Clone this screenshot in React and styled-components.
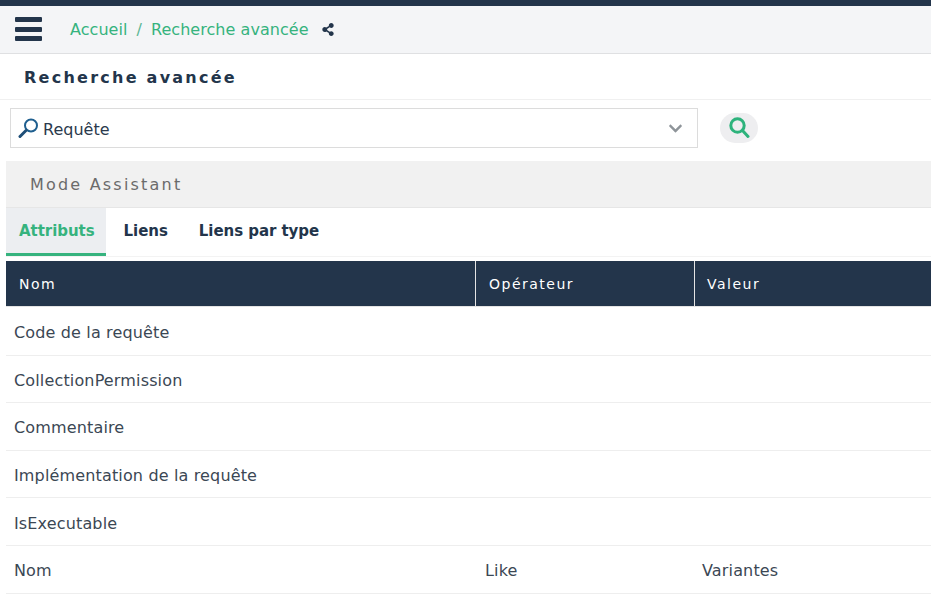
import React from "react";
import styled, { createGlobalStyle } from "styled-components";
import { FaShareAlt, FaChevronDown } from "react-icons/fa";

const GlobalStyle = createGlobalStyle`
  html, body {
    margin: 0;
    padding: 0;
    background: #fff;
    overflow: hidden;
    font-family: "DejaVu Sans", sans-serif;
  }
`;

const Page = styled.div`
  width: 931px;
  height: 599px;
  overflow: hidden;
  border-top: 6px solid #23354b;
  box-sizing: border-box;
`;

const NavBar = styled.div`
  display: flex;
  align-items: center;
  height: 47px;
  background: #f4f5f7;
  border-bottom: 1px solid #dfe0e2;
  padding-left: 15px;
`;

const Burger = styled.svg`
  width: 27px;
  height: 24px;
  margin: -1px 28px 0 0;
`;

const Crumb = styled.span`
  font-size: 16px;
  letter-spacing: 0.05px;
  color: #36b37e;
`;

const CrumbSep = styled(Crumb)`
  margin: 0 9px;
  color: #5cb795;
`;

const ShareIcon = styled(FaShareAlt)`
  width: 12px;
  height: 13px;
  color: #23354b;
  margin-left: 13px;
`;

const TitleRow = styled.div`
  display: flex;
  align-items: center;
  box-sizing: border-box;
  height: 46px;
  padding: 1px 0 0 24px;
  border-bottom: 1px solid #f0f0f0;
`;

const Title = styled.h1`
  margin: 0;
  font-size: 16px;
  font-weight: 700;
  letter-spacing: 2.25px;
  color: #23354b;
`;

const SearchRow = styled.div`
  display: flex;
  align-items: flex-start;
  padding: 8px 0 0 10px;
  height: 53px;
`;

const Select = styled.div`
  display: flex;
  align-items: center;
  box-sizing: border-box;
  width: 688px;
  height: 40px;
  border: 1px solid #dcdcdc;
  padding: 2px 14px 0 7px;
  font-size: 16px;
  color: #2b3a4d;
`;

const SelectIcon = styled.svg`
  width: 21px;
  height: 21px;
  margin: -2px 4px 0 0;
  flex: none;
`;

const SelectLabel = styled.span`
  flex: 1;
`;

const Chevron = styled(FaChevronDown)`
  width: 15px;
  height: 15px;
  margin-top: -2px;
  color: #8e9499;
`;

const SearchButton = styled.button`
  display: flex;
  align-items: center;
  justify-content: center;
  width: 38px;
  height: 30px;
  margin: 5px 0 0 22px;
  padding: 0;
  border: none;
  border-radius: 15px;
  background: #eeeef0;
`;

const ModeBar = styled.div`
  display: flex;
  align-items: center;
  height: 46px;
  margin-left: 6px;
  padding-left: 24px;
  background: #f1f1f1;
  border-bottom: 1px solid #e6e6e6;
  font-size: 16px;
  letter-spacing: 2.2px;
  color: #6b6b6b;
`;

const Tabs = styled.div`
  display: flex;
  height: 48px;
  margin-left: 6px;
  border-bottom: 1px solid #f3f3f3;
`;

const Tab = styled.div`
  display: flex;
  align-items: center;
  box-sizing: border-box;
  padding: ${(p) => (p.$active ? "1px 11px 0 13px" : "1px 13px 0 18px")};
  font-size: 15px;
  letter-spacing: -0.05px;
  font-weight: 700;
  color: ${(p) => (p.$active ? "#36b37e" : "#23354b")};
  background: ${(p) => (p.$active ? "#eceef1" : "transparent")};
  border-bottom: 3px solid ${(p) => (p.$active ? "#36b37e" : "transparent")};
`;

const Table = styled.div`
  margin: 4px 0 0 6px;
`;

const Columns = styled.div`
  display: grid;
  grid-template-columns: 469px 219px 1fr;
`;

const HeaderRow = styled(Columns)`
  height: 45px;
  background: #23354b;
  border-bottom: 1px solid #e4e4e4;
  margin-bottom: 1px;
`;

const HeaderCell = styled.div`
  display: flex;
  align-items: center;
  padding-left: ${(p) => p.$pad || 13}px;
  font-size: 14px;
  letter-spacing: 1.5px;
  color: #fff;
  border-left: ${(p) => (p.$first ? "none" : "1px solid #e4e4e4")};
`;

const Row = styled(Columns)`
  height: 47.6px;
  box-sizing: border-box;
  padding-top: 3px;
  border-bottom: 1px solid #eeeeee;
  align-items: center;
  font-size: 16px;
  letter-spacing: 0.15px;
  color: #3b4754;
`;

const Cell = styled.div`
  padding-left: ${(p) => p.$pad || 8}px;
`;

const rows = [
  ["Code de la requête", "", ""],
  ["CollectionPermission", "", ""],
  ["Commentaire", "", ""],
  ["Implémentation de la requête", "", ""],
  ["IsExecutable", "", ""],
  ["Nom", "Like", "Variantes"],
  ["", "", ""],
];

export default function App() {
  return (
    <Page>
      <GlobalStyle />
      <NavBar>
        <Burger viewBox="0 0 27 24" fill="#23354b">
          <rect x="0" y="0" width="27" height="5" rx="1" />
          <rect x="0" y="10" width="27" height="5" rx="1" />
          <rect x="0" y="19" width="27" height="5" rx="1" />
        </Burger>
        <Crumb>Accueil</Crumb>
        <CrumbSep>/</CrumbSep>
        <Crumb>Recherche avancée</Crumb>
        <ShareIcon />
      </NavBar>
      <TitleRow>
        <Title>Recherche avancée</Title>
      </TitleRow>
      <SearchRow>
        <Select>
          <SelectIcon viewBox="0 0 21 21" fill="none">
            <circle cx="13" cy="7.5" r="6" stroke="#1f5f8f" strokeWidth="2" />
            <path d="M8 12.5 L2 18.5" stroke="#1f4f78" strokeWidth="3" strokeLinecap="round" />
          </SelectIcon>
          <SelectLabel>Requête</SelectLabel>
          <Chevron />
        </Select>
        <SearchButton aria-label="Rechercher">
          <svg width="22" height="22" viewBox="0 0 22 22" fill="none">
            <circle cx="9.5" cy="8.5" r="6.7" stroke="#2db37c" strokeWidth="3" />
            <path d="M14.5 13.5 L20 19.5" stroke="#2db37c" strokeWidth="3" strokeLinecap="round" />
          </svg>
        </SearchButton>
      </SearchRow>
      <ModeBar>Mode Assistant</ModeBar>
      <Tabs>
        <Tab $active>Attributs</Tab>
        <Tab>Liens</Tab>
        <Tab>Liens par type</Tab>
      </Tabs>
      <Table>
        <HeaderRow>
          <HeaderCell $first>Nom</HeaderCell>
          <HeaderCell>Opérateur</HeaderCell>
          <HeaderCell $pad={12}>Valeur</HeaderCell>
        </HeaderRow>
        {rows.map((r, i) => (
          <Row key={i}>
            <Cell>{r[0]}</Cell>
            <Cell $pad={10}>{r[1]}</Cell>
            <Cell>{r[2]}</Cell>
          </Row>
        ))}
      </Table>
    </Page>
  );
}
